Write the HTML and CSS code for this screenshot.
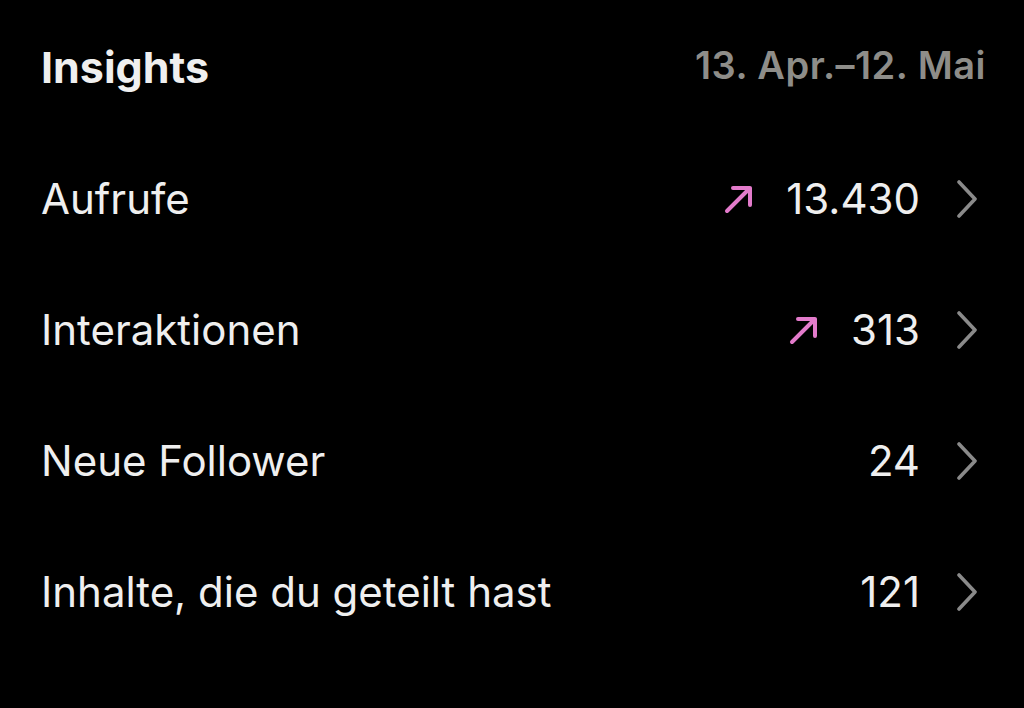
FILE: index.html
```html
<!DOCTYPE html>
<html lang="de">
<head>
<meta charset="utf-8">
<title>Insights</title>
<link rel="stylesheet" href="styles.css">
</head>
<body>
<main class="card">
  <header class="head">
    <h1 class="title">Insights</h1>
    <span class="range">13. Apr.–12. Mai</span>
  </header>
  <ul class="list">
    <li class="row">
      <span class="label">Aufrufe</span>
      <span class="value">
        <svg class="trend" viewBox="0 0 30 30" aria-hidden="true"><path d="M3 27 L26 4 M9 4 H26 V21"/></svg>
        <span class="num">13.430</span>
      </span>
      <svg class="chev" viewBox="0 0 20 38" aria-hidden="true"><path d="M2 2 L18 19 L2 36"/></svg>
    </li>
    <li class="row">
      <span class="label">Interaktionen</span>
      <span class="value">
        <svg class="trend" viewBox="0 0 30 30" aria-hidden="true"><path d="M3 27 L26 4 M9 4 H26 V21"/></svg>
        <span class="num">313</span>
      </span>
      <svg class="chev" viewBox="0 0 20 38" aria-hidden="true"><path d="M2 2 L18 19 L2 36"/></svg>
    </li>
    <li class="row">
      <span class="label">Neue Follower</span>
      <span class="value"><span class="num">24</span></span>
      <svg class="chev" viewBox="0 0 20 38" aria-hidden="true"><path d="M2 2 L18 19 L2 36"/></svg>
    </li>
    <li class="row">
      <span class="label">Inhalte, die du geteilt hast</span>
      <span class="value"><span class="num">121</span></span>
      <svg class="chev" viewBox="0 0 20 38" aria-hidden="true"><path d="M2 2 L18 19 L2 36"/></svg>
    </li>
  </ul>
</main>
</body>
</html>
```
FILE: styles.css
```css
html, body {
  margin: 0;
  padding: 0;
  background: #000;
}
body {
  width: 1024px;
  height: 708px;
  overflow: hidden;
  font-family: Inter, "Noto Sans", "Liberation Sans", sans-serif;
  color: #efefef;
}
.card {
  padding: 41px 39px 0 41px;
}
.head {
  display: flex;
  align-items: baseline;
  justify-content: space-between;
  height: 92px;
}
.title {
  margin: 0;
  font-size: 43px;
  font-weight: 700;
  color: #efefef;
}
.range {
  font-size: 38px;
  font-weight: 600;
  color: #8e8d89;
  letter-spacing: 0.5px;
  margin-right: -1px;
  transform: translateY(-4px);
}
.list {
  list-style: none;
  margin: 0;
  padding: 0;
}
.row {
  display: flex;
  align-items: center;
  height: 131px;
  font-size: 42px;
  font-weight: 400;
}
.label {
  flex: 1;
}
.value {
  display: flex;
  align-items: center;
  gap: 32px;
}
.trend {
  width: 30px;
  height: 30px;
  fill: none;
  stroke: #e37bcb;
  stroke-width: 4;
  stroke-linecap: round;
  stroke-linejoin: round;
}
.chev {
  width: 20px;
  height: 38px;
  margin-left: 37px;
  margin-right: 8px;
  fill: none;
  stroke: #8a8a8a;
  stroke-width: 3.6;
  stroke-linecap: round;
  stroke-linejoin: round;
}
```
